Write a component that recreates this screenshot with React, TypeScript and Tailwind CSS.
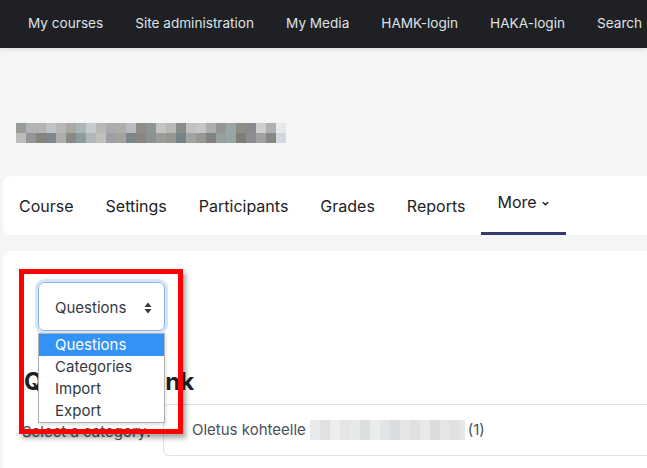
import React from "react";

const topLinks = ["My courses", "Site administration", "My Media", "HAMK-login", "HAKA-login", "Search"];
const tabs = ["Course", "Settings", "Participants", "Grades", "Reports"];

const row1 = ["#9a9a97", "#b0b6b8", "#b3b3b3", "#bfc3c5", "#b8b6b6", "#aba9a4", "#acb6b6", "#c8cccd", "#bab8b6", "#a9adb0", "#aeaeac", "#babcbf", "#8f8c89", "#8c9791", "#c2c4c5", "#b9b9b6", "#8b8d8c", "#c1c1c0", "#c6c6c7", "#aeaeae", "#959595", "#9aa5a5", "#8b8f86", "#8a8b90", "#ccced0", "#b0b0b0", "#e6e8ea"];
const row2 = ["#bdbcba", "#949595", "#86847f", "#7f898d", "#b0aeac", "#898a85", "#8a9c9c", "#b1b6b6", "#c1c0bf", "#9fa0a6", "#a3a39d", "#7a858c", "#8a8480", "#8b9191", "#9a9c9a", "#989690", "#76848a", "#a3a3a3", "#989791", "#828282", "#95a0a1", "#98a5a5", "#7e8076", "#8c8e94", "#a1a1a1", "#868883", "#d4d8de"];
const blur2 = ["#e8eaeb", "#dfe1e3", "#eceeef", "#e2e4e5", "#e6e8e9", "#dcdfe0", "#e9ebec", "#e1e3e4", "#d9dcde", "#e4e6e7", "#dee0e2", "#e7e9ea", "#dadcdd", "#e3e5e6", "#dfe1e2", "#e5e7e8"];

export default function App() {
  return (
    <div className="relative w-[647px] h-[468px] overflow-hidden bg-[#f4f5f7] font-['Inter',sans-serif] text-[#1d2125]">
      <nav className="h-12 bg-[#1f2023] flex items-center gap-8 pl-7 pb-[2px] text-[13.6px] text-[#dee2e6] whitespace-nowrap shadow-[0_2px_3px_rgba(0,0,0,0.08)]">
        {topLinks.map((l) => (
          <span key={l}>{l}</span>
        ))}
      </nav>

      <div className="pl-4 pt-[75px]">
        <div className="flex">
          {row1.map((c, i) => (
            <div key={i} className="w-[10px] h-[10px]" style={{ background: c }} />
          ))}
        </div>
        <div className="flex">
          {row2.map((c, i) => (
            <div key={i} className="w-[10px] h-[10px]" style={{ background: c }} />
          ))}
        </div>
      </div>

      <div className="ml-[3px] mt-[33px] h-[59px] w-[700px] bg-white rounded-lg flex items-stretch text-[16px] text-[#1d2125] whitespace-nowrap">
        {tabs.map((t) => (
          <div key={t} className="px-4 flex items-center pt-[1px]">
            {t}
          </div>
        ))}
        <div className="px-4 flex items-center border-b-[3px] border-[#343a6b] pt-[2px] -mt-[6px]">
          <span>More</span>
          <svg width="9" height="9" viewBox="0 0 10 10" className="ml-[4px] mt-[2px]">
            <path d="M2 3.5 L5 6.5 L8 3.5" fill="none" stroke="#1d2125" strokeWidth="1.6" />
          </svg>
        </div>
      </div>

      <div className="ml-[3px] mt-4 h-[300px] w-[700px] bg-white rounded-lg pl-[35px] pt-[31px]">
        <div className="w-[127px] h-[49px] border border-[#8ab4f0] rounded-md shadow-[0_0_0_3px_rgba(140,180,240,0.35)] flex items-center justify-between pl-4 pr-[12px] pt-[3px] text-[15px] text-[#343a40]">
          <span>Questions</span>
          <svg width="8" height="12" viewBox="0 0 8 12">
            <path d="M4 0.5 L7.5 5 L0.5 5 Z M4 11.5 L7.5 7 L0.5 7 Z" fill="#343a40" />
          </svg>
        </div>

        <h2 className="-ml-[14px] mt-[39px] text-[24px] font-bold text-[#1d2125] leading-none">Question bank</h2>

        <div className="-ml-[16px] mt-[10px] flex items-center">
          <span className="text-[15px] text-[#495057] w-[141px] pt-[5px]">Select a category:</span>
          <div className="w-[520px] h-[52px] border border-[#dee2e6] rounded-md flex items-center pl-7 text-[15px] text-[#495057] whitespace-nowrap">
            <span>Oletus kohteelle</span>
            <span className="flex w-[155px] overflow-hidden ml-[4px]">
              {blur2.map((c, i) => (
                <span key={i} className="block shrink-0 w-[10px] h-[20px]" style={{ background: c }} />
              ))}
            </span>
            <span className="ml-[3px]">(1)</span>
          </div>
        </div>
      </div>

      <div className="absolute left-[38px] top-[333px] w-[127px] bg-white border border-[#b0b0b0] text-[15px] text-[#343a40] leading-[22px] shadow-[1px_2px_3px_rgba(0,0,0,0.12)]">
        <div className="bg-[#3392f5] text-white pl-4">Questions</div>
        <div className="pl-4">Categories</div>
        <div className="pl-4">Import</div>
        <div className="pl-4">Export</div>
      </div>

      <div className="absolute left-[19px] top-[269px] w-[164px] h-[165px] border-[5px] border-[#ff0000] shadow-[3px_4px_5px_rgba(0,0,0,0.35)]" />
    </div>
  );
}
